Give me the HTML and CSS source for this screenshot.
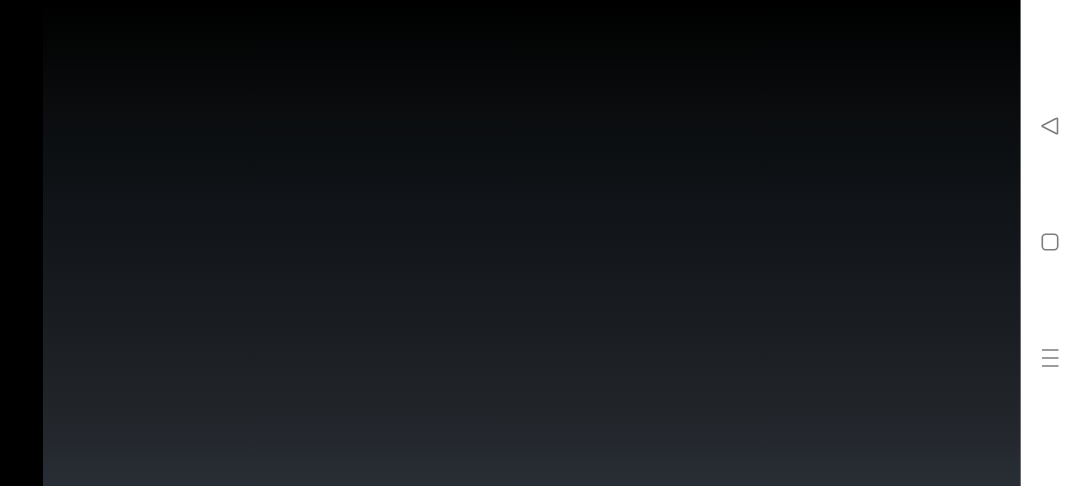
FILE: index.html
```html
<!DOCTYPE html>
<html lang="en">
<head>
<meta charset="utf-8">
<title>Screen</title>
<link rel="stylesheet" href="styles.css">
</head>
<body>
<div class="screen">
  <div class="cutout"></div>
  <main class="content"></main>
  <nav class="navbar">
    <svg class="nav-icon" viewBox="0 0 20 20"><path d="M17.5 2.8V17.2a.6.6 0 0 1-.9.5L2.4 10.5a.55.55 0 0 1 0-1L16.6 2.3a.6.6 0 0 1 .9.5Z"/></svg>
    <svg class="nav-icon" viewBox="0 0 20 20"><rect x="2.3" y="2.3" width="15.4" height="15.4" rx="3.4"/></svg>
    <svg class="nav-icon" viewBox="0 0 20 20"><path d="M2 2H18.5M2 10H18.5M2 18H18.5"/></svg>
  </nav>
</div>
</body>
</html>
```
FILE: styles.css
```css
html, body {
  margin: 0;
  padding: 0;
  height: 100%;
  background: #000;
  overflow: hidden;
}
.screen {
  display: flex;
  width: 1080px;
  height: 486px;
}
.cutout {
  width: 43px;
  flex: none;
  background: #000;
}
.content {
  flex: 1;
  background: linear-gradient(to bottom, #000 0, #020303 30px, #0a0c0e 110px, #12161a 230px, #1a1e22 330px, #22262b 420px, #292d35 486px);
  border-right: 1px solid #6a6c70;
}
.navbar {
  width: 59px;
  flex: none;
  background: #fff;
  box-sizing: border-box;
  display: flex;
  flex-direction: column;
  align-items: center;
  justify-content: center;
  gap: 96px;
  padding-bottom: 2px;
  padding-right: 1px;
}
.nav-icon {
  width: 20px;
  height: 20px;
  fill: none;
  stroke: #7c7c7c;
  stroke-width: 1.6;
}
```
